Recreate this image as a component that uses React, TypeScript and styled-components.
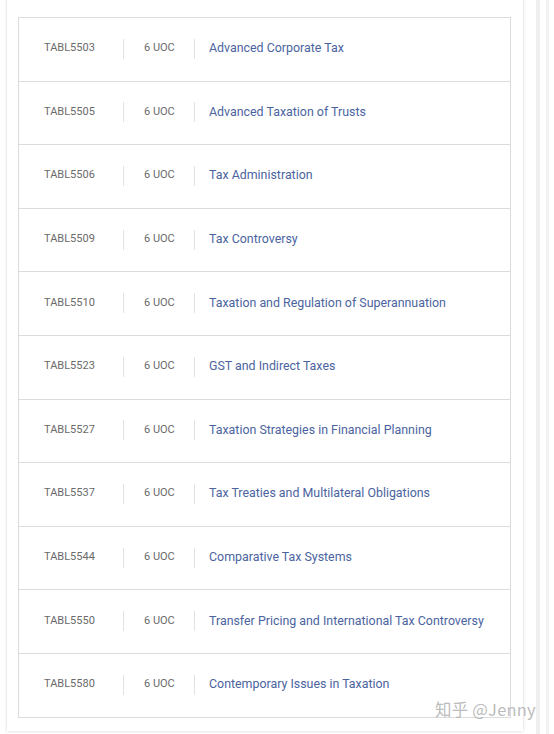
import React from "react"
import styled, { createGlobalStyle } from "styled-components"

type Course = {
  code: string
  uoc: number
  title: string
}

const courses: Course[] = [
  { code: "TABL5503", uoc: 6, title: "Advanced Corporate Tax" },
  { code: "TABL5505", uoc: 6, title: "Advanced Taxation of Trusts" },
  { code: "TABL5506", uoc: 6, title: "Tax Administration" },
  { code: "TABL5509", uoc: 6, title: "Tax Controversy" },
  { code: "TABL5510", uoc: 6, title: "Taxation and Regulation of Superannuation" },
  { code: "TABL5523", uoc: 6, title: "GST and Indirect Taxes" },
  { code: "TABL5527", uoc: 6, title: "Taxation Strategies in Financial Planning" },
  { code: "TABL5537", uoc: 6, title: "Tax Treaties and Multilateral Obligations" },
  { code: "TABL5544", uoc: 6, title: "Comparative Tax Systems" },
  { code: "TABL5550", uoc: 6, title: "Transfer Pricing and International Tax Controversy" },
  { code: "TABL5580", uoc: 6, title: "Contemporary Issues in Taxation" },
]

// ______________________________________________________
// global
const Global = createGlobalStyle`
  html, body {
    margin: 0;
    padding: 0;
    background: #fff;
    font-family: Roboto, "Noto Sans", "Noto Sans CJK SC", sans-serif;
  }
`

const Page = styled.div`
  display: flex;
  align-items: flex-start;
  height: 734px;
  overflow: hidden;
  position: relative;
`

const Card = styled.div`
  width: 516px;
  margin-left: 7px;
  margin-top: -10px;
  padding: 27px 12px 13px 11px;
  background: #fff;
  box-shadow: 0 0 3px rgba(0, 0, 0, 0.18);
  box-sizing: border-box;
`

const Side = styled.div`
  display: flex;
  gap: 6px;
  margin-left: 13px;
  height: 734px;
`

const Strip = styled.div<{ $w: number; $c: string }>`
  width: ${p => p.$w}px;
  height: 100%;
  background: ${p => p.$c};
`

const List = styled.div`
  border: 1px solid #dcdcdc;
  border-bottom: none;
`

const Row = styled.div`
  display: flex;
  align-items: center;
  height: 59.6px;
  border-bottom: 1px solid #dcdcdc;
  padding-left: 25px;
  padding-bottom: 3px;
  box-sizing: content-box;
`

const Code = styled.span`
  width: 79px;
  font-size: 11px;
  color: #6a6a6a;
`

const Divider = styled.span`
  width: 1px;
  height: 20px;
  background: #e2e2e2;
  margin-top: 2px;
`

const Uoc = styled.span`
  width: 50px;
  padding-left: 20px;
  font-size: 11px;
  color: #6a6a6a;
`

const Title = styled.a`
  padding-left: 14px;
  font-size: 12.4px;
  color: #4b64a0;
  text-decoration: none;
`

const Watermark = styled.div`
  position: absolute;
  left: 435px;
  top: 697px;
  font-size: 16.5px;
  color: rgba(170, 170, 170, 0.8);
  letter-spacing: 0.2px;
  font-family: "Noto Sans CJK SC", Roboto, sans-serif;
`

// ______________________________________________________
//
const App: React.FC = () => {
  return (
    <Page>
      <Global />
      <Card>
        <List>
          {courses.map(c => (
            <Row key={c.code}>
              <Code>{c.code}</Code>
              <Divider />
              <Uoc>{c.uoc} UOC</Uoc>
              <Divider />
              <Title href="#">{c.title}</Title>
            </Row>
          ))}
        </List>
      </Card>
      <Side>
        <Strip $w={4} $c="#efefef" />
        <Strip $w={3} $c="#f2f2f2" />
      </Side>
      <Watermark>知乎 @Jenny</Watermark>
    </Page>
  )
}

export default App
